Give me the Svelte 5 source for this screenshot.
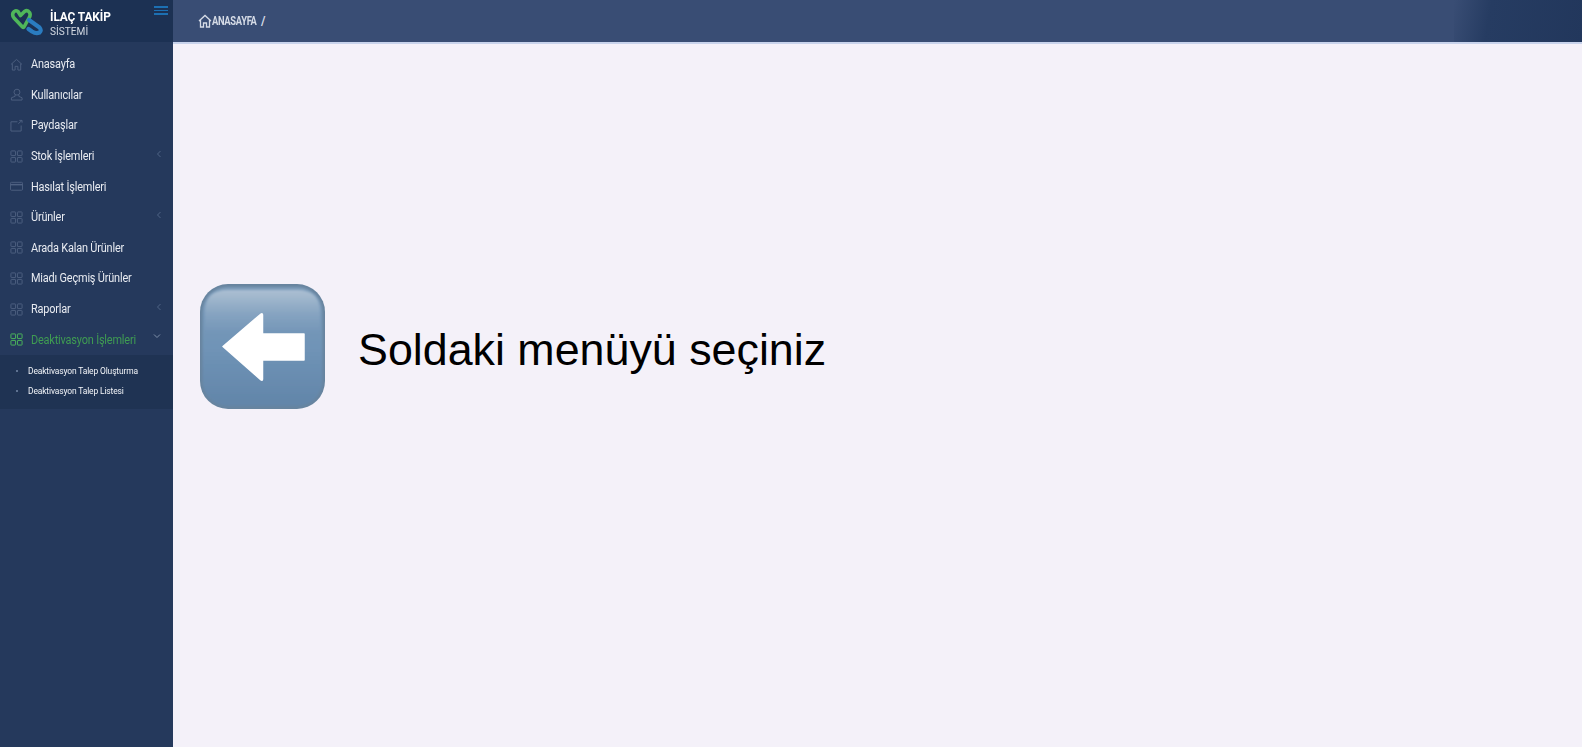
<script>
	const menu = [
		{ label: 'Anasayfa', icon: 'home' },
		{ label: 'Kullanıcılar', icon: 'user' },
		{ label: 'Paydaşlar', icon: 'share' },
		{ label: 'Stok İşlemleri', icon: 'grid', arrow: true },
		{ label: 'Hasılat İşlemleri', icon: 'card' },
		{ label: 'Ürünler', icon: 'grid', arrow: true },
		{ label: 'Arada Kalan Ürünler', icon: 'grid' },
		{ label: 'Miadı Geçmiş Ürünler', icon: 'grid' },
		{ label: 'Raporlar', icon: 'grid', arrow: true },
		{ label: 'Deaktivasyon İşlemleri', icon: 'grid', open: true }
	];
	const subItems = ['Deaktivasyon Talep Oluşturma', 'Deaktivasyon Talep Listesi'];
</script>

<div class="layout">
	<aside class="sidebar">
		<div class="brand">
			<svg class="logo" viewBox="10 6 35 29" width="35" height="29" fill="none" stroke-linecap="round" stroke-linejoin="round">
				<path d="M20.5 14.5 L24.5 10.5 Q27.5 8.5 29.5 11.5 Q31 14 29 17 L24 26 Q23.5 27 22.5 26 L14 17 Q12 14.5 13 12 Q15 8.5 18 10.5 Z" stroke="#4fb75a" stroke-width="3.6" />
				<path d="M29 19 L39.5 26.5 Q42 29.5 39.5 31.5 Q36 33 32 30.5 L28.5 28" stroke="#2a7cc0" stroke-width="4.2" />
			</svg>
			<div class="brand-text">
				<strong>İLAÇ TAKİP</strong>
				<span>SİSTEMİ</span>
			</div>
			<div class="burger"><i></i><i></i><i></i></div>
		</div>
		<nav>
			{#each menu as item}
				<div class="item" class:open={item.open}>
					<svg class="icon" viewBox="0 0 14 14" width="13" height="13" fill="none" stroke="currentColor" stroke-width="1">
						{#if item.icon === 'home'}
							<path d="M1 7 L7 1.5 L13 7 M2.5 6 V13 H5.5 V9 H8.5 V13 H11.5 V6" />
						{:else if item.icon === 'user'}
							<circle cx="7.5" cy="4.5" r="3.2" />
							<path d="M5.5 7.5 V9 L1.5 10.5 V13 H13 V10.5 L9.5 9 V7.5" />
						{:else if item.icon === 'share'}
							<path d="M8 3 H1 V13 H12 V7 M9 5 L13 1.5 M10 1.5 H13 V4" />
						{:else if item.icon === 'card'}
							<rect x="0.5" y="2.5" width="13" height="8.5" rx="1" />
							<path d="M0.5 5 H13.5" stroke-width="1.6" />
						{:else}
							<rect x="1" y="1" width="5" height="5" rx="0.6" />
							<rect x="8" y="1" width="5" height="5" rx="0.6" />
							<rect x="1" y="8" width="5" height="5" rx="0.6" />
							<rect x="8" y="8" width="5" height="5" rx="0.6" />
						{/if}
					</svg>
					<span class="label">{item.label}</span>
					{#if item.arrow}
						<svg class="chev" viewBox="0 0 6 8" width="6" height="8" fill="none" stroke="currentColor"><path d="M4.5 1 L1.5 4 L4.5 7" /></svg>
					{:else if item.open}
						<svg class="chev down" viewBox="0 0 8 6" width="8" height="6" fill="none" stroke="currentColor"><path d="M1 1.5 L4 4.5 L7 1.5" /></svg>
					{/if}
				</div>
			{/each}
		</nav>
		<ul class="sub">
			{#each subItems as sub}
				<li><span>{sub}</span></li>
			{/each}
		</ul>
	</aside>

	<div class="main">
		<header class="topbar">
			<svg viewBox="0 0 14 14" width="14" height="14" fill="none" stroke="#d5dbe6" stroke-width="1.3">
				<path d="M1 7 L7 1.5 L13 7 M2.5 6 V13 H5.5 V9 H8.5 V13 H11.5 V6" />
			</svg>
			<span class="crumb">ANASAYFA</span>
			<span class="slash">/</span>
			<div class="corner"></div>
		</header>
		<section class="content">
			<svg class="emoji" viewBox="0 0 125 125" width="125" height="125">
				<defs>
					<linearGradient id="face" x1="0" y1="0" x2="0" y2="1">
						<stop offset="0" stop-color="#7d9cba" />
						<stop offset="0.5" stop-color="#7094b7" />
						<stop offset="1" stop-color="#6285a9" />
					</linearGradient>
					<linearGradient id="gloss" x1="0" y1="0" x2="0" y2="1">
						<stop offset="0" stop-color="#fff" stop-opacity="0.36" />
						<stop offset="0.55" stop-color="#fff" stop-opacity="0.12" />
						<stop offset="1" stop-color="#fff" stop-opacity="0" />
					</linearGradient>
					<filter id="soft" x="-10%" y="-10%" width="120%" height="120%">
						<feGaussianBlur stdDeviation="1.2" />
					</filter>
				</defs>
				<rect x="0" y="0" width="125" height="125" rx="28" fill="#67849f" />
				<rect x="2.5" y="3" width="120" height="119" rx="25" fill="url(#face)" filter="url(#soft)" />
				<path d="M5 28 Q5 6 28 6 H97 Q120 6 120 28 V48 H5 Z" fill="url(#gloss)" filter="url(#soft)" />
				<path d="M23 62.5 L61 30 Q62.5 29 62.5 31 V50 H104 V76 H62.5 V95 Q62.5 97 61 96 Z" fill="#fff" stroke="#fff" stroke-width="1.5" stroke-linejoin="round" />
			</svg>
			<p>Soldaki menüyü seçiniz</p>
		</section>
	</div>
</div>

<style>
	:global(body) {
		margin: 0;
	}

	.layout {
		display: flex;
		height: 747px;
		overflow: hidden;
		font-family: Roboto, sans-serif;
	}

	.sidebar {
		width: 173px;
		flex-shrink: 0;
		background: #25395c;
		display: flex;
		flex-direction: column;
	}

	.brand {
		height: 42px;
		flex-shrink: 0;
		box-sizing: border-box;
		background: #1c3153;
		display: flex;
		align-items: center;
		padding: 0 0 0 10px;
		gap: 5px;
		position: relative;
	}

	.logo {
		margin-top: 1px;
		flex-shrink: 0;
	}

	.brand-text {
		display: flex;
		flex-direction: column;
		line-height: 15px;
		margin-top: 5px;
		color: #fff;
		white-space: nowrap;
	}

	.brand-text strong {
		font-size: 12.5px;
		font-weight: 700;
		letter-spacing: -0.1px;
		transform: scaleX(0.95);
		transform-origin: left;
	}

	.brand-text span {
		font-size: 11px;
		color: #d3d9e2;
		transform: scaleX(0.92);
		transform-origin: left;
	}

	.burger {
		position: absolute;
		top: 6px;
		right: 5px;
		width: 14px;
		display: flex;
		flex-direction: column;
		gap: 2px;
	}

	.burger i {
		display: block;
		height: 1.5px;
		background: #1c70b3;
	}

	nav {
		padding-top: 7px;
		display: flex;
		flex-direction: column;
	}

	.item {
		height: 30.6px;
		display: flex;
		align-items: center;
		padding: 0 10px;
		color: #e8ebf1;
		font-size: 12px;
		letter-spacing: -0.2px;
		position: relative;
	}

	.icon {
		color: #4f6182;
		flex-shrink: 0;
		margin-right: 8px;
	}

	.label {
		white-space: nowrap;
		transform: scaleX(0.91);
		transform-origin: left;
	}

	.chev {
		position: absolute;
		right: 11px;
		top: 9px;
		color: #4f6485;
	}

	.item.open {
		color: #3f9c52;
	}

	.item.open .icon {
		color: #4dbb5c;
	}

	.chev.down {
		right: 12px;
		color: #7f90aa;
	}

	.sub {
		list-style: none;
		margin: 0;
		padding: 6px 0 8px 28px;
		background: #1f3353;
		color: #f2f4f8;
		font-size: 9px;
		letter-spacing: -0.15px;
	}

	.sub li {
		height: 20px;
		line-height: 20px;
		position: relative;
		white-space: nowrap;
	}

	.sub li span {
		display: inline-block;
		transform: scaleX(0.94);
		transform-origin: left;
	}

	.sub li::before {
		content: '';
		position: absolute;
		left: -12px;
		top: 9px;
		width: 2px;
		height: 2px;
		border-radius: 50%;
		background: #7488a6;
	}

	.main {
		flex: 1;
		display: flex;
		flex-direction: column;
		min-width: 0;
	}

	.topbar {
		height: 44px;
		box-sizing: border-box;
		flex-shrink: 0;
		background: #394d74;
		border-bottom: 2px solid #c8d3ec;
		display: flex;
		align-items: center;
		padding-left: 25px;
		color: #d5dbe6;
		font-size: 12px;
		font-weight: 700;
		position: relative;
		overflow: hidden;
	}

	.crumb {
		width: 46px;
		white-space: nowrap;
		letter-spacing: -0.4px;
		transform: scaleX(0.78);
		transform-origin: left;
	}

	.slash {
		margin-left: 3px;
	}

	.corner {
		position: absolute;
		top: 0;
		right: 0;
		bottom: 0;
		width: 128px;
		background: linear-gradient(100deg, #394d74 0%, #263c62 28%, #22375c 100%);
	}

	.content {
		flex: 1;
		background: #f4f1f9;
		display: flex;
		align-items: flex-start;
		padding: 240px 0 0 27px;
		gap: 33px;
	}

	.emoji {
		flex-shrink: 0;
	}

	p {
		margin: 38px 0 0;
		font-family: 'Liberation Sans', Arial, sans-serif;
		font-size: 44.8px;
		line-height: 54px;
		color: #000;
		white-space: nowrap;
	}
</style>
